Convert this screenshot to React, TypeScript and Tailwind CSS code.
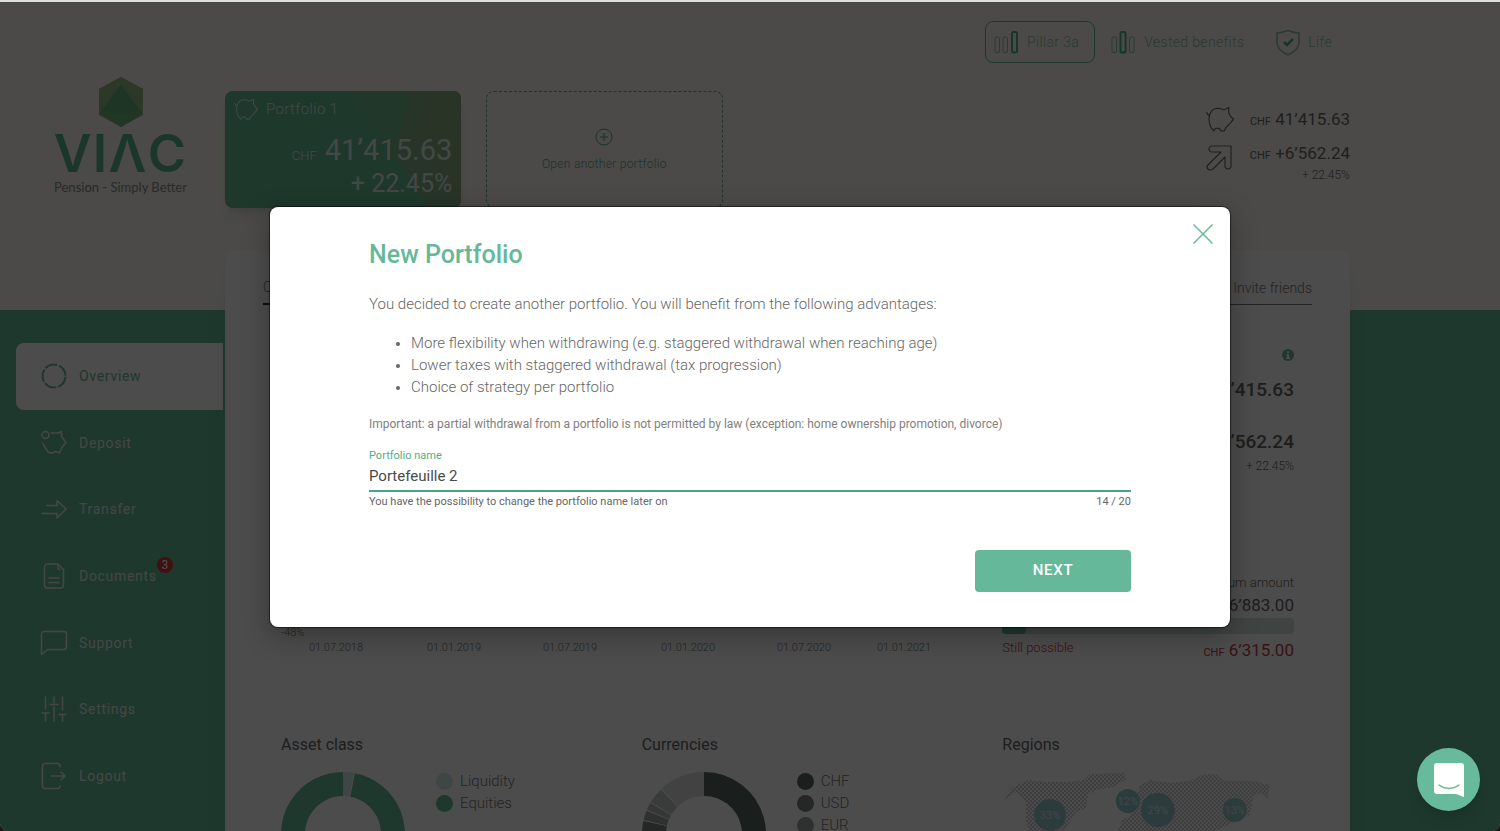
import { useState } from "react";
import type { ReactNode } from "react";

const CHART_DATES = [
  { x: 28, label: "01.07.2018" },
  { x: 146, label: "01.01.2019" },
  { x: 262, label: "01.07.2019" },
  { x: 380, label: "01.01.2020" },
  { x: 496, label: "01.07.2020" },
  { x: 596, label: "01.01.2021" },
];

const ASSETS = [
  { name: "Liquidity", color: "#d6ebe6", from: 0, to: 10 },
  { name: "Equities", color: "#67bb99", from: 11, to: 360 },
];

const CURRENCIES = [
  { name: "CHF", color: "#57645f", from: 0, to: 150 },
  { name: "USD", color: "#788481", from: 151, to: 282 },
  { name: "EUR", color: "#9da3a1", from: 283, to: 292 },
  { name: "JPY", color: "#b4b9b8", from: 293, to: 300 },
  { name: "GBP", color: "#c4c7c6", from: 301, to: 316 },
  { name: "Other", color: "#dadcdb", from: 317, to: 360 },
];

const REGIONS = [
  { label: "33%", x: 48, y: 43, r: 16 },
  { label: "12%", x: 126, y: 29, r: 12 },
  { label: "29%", x: 156, y: 38, r: 17 },
  { label: "13%", x: 233, y: 38, r: 12 },
];

function arc(from: number, to: number) {
  const p = (deg: number) => {
    const a = ((deg - 90) * Math.PI) / 180;
    return `${62 + 50 * Math.cos(a)} ${62 + 50 * Math.sin(a)}`;
  };
  return `M${p(from)} A50 50 0 ${to - from > 180 ? 1 : 0} 1 ${p(to)}`;
}

function Icon({ children, className = "size-7" }: { children: ReactNode; className?: string }) {
  return (
    <svg viewBox="0 0 28 28" className={`${className} shrink-0`} fill="none" stroke="currentColor" strokeWidth="1.5" strokeLinecap="round" strokeLinejoin="round" aria-hidden="true">
      {children}
    </svg>
  );
}

function Piggy({ className }: { className?: string }) {
  return (
    <Icon className={className}>
      <path strokeWidth="1.2" d="M.7 7.5c.4 1.600 1.400 2.600 2.800 3C4.500 6.500 7 4 10 3.500c3-.6 5.500 0 8 1.300L22.700 2.500V8l2 3.500 2.800 2.700-3.200 4-4.300 4.300-1.700 3.300H15l-1.700-2.500H9.500l-1.800 2.500-2.700-3.300C3.500 19.500 2.500 15 3.500 10.500" />
    </Icon>
  );
}

const NAV = [
  {
    label: "Overview",
    icon: <circle cx="14" cy="14" r="11.500" strokeDasharray="12.700 1.750" strokeWidth="2" strokeLinecap="butt" strokeDashoffset="-1" />,
  },
  {
    label: "Deposit",
    icon: <><circle cx="5.500" cy="6" r="3.500" /><path d="M11 4h7l3.500-1.500v5l4.500 6-4.500 5.500-2 5-3.500-1.500-4 1.500-3.500-.5-4-6L2.500 14" /></>,
  },
  {
    label: "Transfer",
    icon: <path d="M7 10.500h10V5.500L26 14l-9 9v-4.500H2" />,
  },
  {
    label: "Documents",
    badge: 3,
    icon: <><path d="M18 2H7.500a3 3 0 0 0-3 3v18a3 3 0 0 0 3 3h13a3 3 0 0 0 3-3V7.500L18 2v3.500a2 2 0 0 0 2 2" /><path d="M9 16h10M9 20.500h10" /></>,
  },
  {
    label: "Support",
    icon: <path d="M4 2.500h20a2.500 2.500 0 0 1 2.500 2.500v13a2.500 2.500 0 0 1-2.500 2.500H7.500L1.500 25.500V5A2.500 2.500 0 0 1 4 2.500z" />,
  },
  {
    label: "Settings",
    icon: <path d="M5.500 2v12M14 2v6M22.500 2v13M5.500 18v8M14 12v14M22.500 20v6M2 18h7M10 9.500h8M19 19.500h7" />,
  },
  {
    label: "Logout",
    icon: <path d="M20 5V4a2.500 2.500 0 0 0-2.500-2.500H5A2.500 2.500 0 0 0 2.500 4v20A2.500 2.500 0 0 0 5 26.500h12.500A2.500 2.500 0 0 0 20 24M11 14h14M21 10l4 4-4 4" />,
  },
];

function Logo() {
  return (
    <div className="flex flex-col items-center pl-4">
      <svg viewBox="0 0 44 50" className="h-[50px] w-11" aria-hidden="true">
        <path d="M22 0 44 12v26L22 50 0 38V12z" fill="#8fbb86" />
        <path d="M22 0 44 12v12L22 8 0 24V12z" fill="#98bb86" />
        <path d="M22 8 10 24 1 36l21 14 21-14-9-12z" fill="#64ae78" />
        <path d="M22 50 1 36l9-2 12 4 12-4 9 2z" fill="#70b77a" />
      </svg>
      <div className="mt-1 font-['Inter'] text-[52px] font-semibold leading-[46px] tracking-wide text-[#5cb896]">VIΛC</div>
      <div className="font-['Lato'] text-[13px] leading-5 text-[#8e8e8b]">Pension - Simply Better</div>
    </div>
  );
}

function Sidebar() {
  return (
    <aside className="w-[15%] shrink-0 pt-[75px]">
      <div className="h-[266px]"><Logo /></div>
      <nav className="grid h-[466px] grid-rows-7 pl-4 pr-[2px]">
        {NAV.map((n, i) => (
          <a
            key={n.label}
            href="#"
            className={`flex items-center gap-[11px] rounded-l-lg pl-6 text-sm tracking-wider ${i === 0 ? "bg-white text-[#67bb99]" : "text-[#e3efea]"}`}
          >
            <Icon>{n.icon}</Icon>
            <span className="relative">
              {n.label}
              {n.badge && (
                <span className="absolute -right-4 -top-[9px] grid size-4 place-items-center rounded-full bg-[#e0383c] text-xs tracking-normal text-white">{n.badge}</span>
              )}
            </span>
          </a>
        ))}
      </nav>
    </aside>
  );
}

function ProductTabs() {
  return (
    <div className="flex h-[42px] shrink-0 justify-end gap-3 text-sm font-light tracking-wide text-[#8fbfab]">
      <a href="#" className="flex items-center gap-2 rounded-lg border border-[#67bb99] pl-2 pr-[15px]">
        <svg viewBox="0 0 25 24" className="h-6 w-[25px]" fill="none" stroke="currentColor" aria-hidden="true">
          <rect x="1" y="7" width="4.500" height="15.500" rx="1.500" />
          <rect x="9" y="7" width="4.500" height="15.500" rx="1.500" />
          <rect x="18" y="2" width="5" height="20.500" rx="1.500" strokeWidth="2" stroke="#4fb48c" />
        </svg>
        Pillar 3a
      </a>
      <a href="#" className="flex items-center gap-2 pl-1">
        <svg viewBox="0 0 25 24" className="h-6 w-[25px]" fill="none" stroke="currentColor" aria-hidden="true">
          <rect x="1" y="7" width="4.500" height="15.500" rx="1.500" />
          <rect x="9.500" y="2" width="5" height="20.500" rx="1.500" strokeWidth="2" stroke="#4fb48c" />
          <rect x="18.500" y="7" width="4.500" height="15.500" rx="1.500" />
        </svg>
        Vested benefits
      </a>
      <a href="#" className="flex items-center gap-2 pl-5 pr-[18px]">
        <svg viewBox="0 0 24 27" className="h-[27px] w-6" fill="none" stroke="currentColor" strokeWidth="1.500" aria-hidden="true">
          <path d="M1 4c4 0 7-1 11-2.500C16 3 19 4 23 4v10c0 5-5 9-11 12C6 23 1 19 1 14z" />
          <path d="m8 13 3 3 6-6" strokeWidth="2.500" stroke="#4fb48c" />
        </svg>
        Life
      </a>
    </div>
  );
}

function Portfolios() {
  return (
    <div className="mt-7 flex h-[117px] shrink-0 gap-[25px]">
      <a href="#" className="relative flex w-[21%] flex-col overflow-hidden rounded-lg bg-[#67bb94] px-[9px] text-right text-[#dff0e8] shadow-lg">
        <svg viewBox="0 0 237 117" className="absolute inset-0 size-full" preserveAspectRatio="none" aria-hidden="true">
          <path d="M124 0h113v117h-32L168 62z" fill="#70b88e" />
          <path d="M185 0h52v117h-32l-37-55z" fill="#80b386" />
          <path d="M205 0h32v117l-30-40-20-30z" fill="#8bb083" />
        </svg>
        <span className="relative flex h-9 items-center gap-2 text-[15px] font-light tracking-wide">
          <Piggy className="size-6" />
          Portfolio 1
        </span>
        <span className="relative mt-[5px] text-[29px] leading-9">
          <small className="mr-2 text-[13px] font-light leading-none">CHF</small>41’415.63
        </span>
        <span className="relative text-[25px] leading-8">+ 22.45%</span>
      </a>
      <button type="button" className="flex w-[21%] flex-col items-center justify-center gap-[10px] rounded-lg border border-dashed border-[#67a58c] text-xs font-light tracking-wide text-[#67a58c]">
        <svg viewBox="0 0 18 18" className="size-[18px]" fill="none" stroke="currentColor" aria-hidden="true">
          <circle cx="9" cy="9" r="8" />
          <path d="M9 5v8M5 9h8" />
        </svg>
        Open another portfolio
      </button>
      <div className="ml-auto grid grid-cols-[auto_auto] content-start gap-x-4 pt-[14px] text-right text-[17px] text-[#6a6a67]">
        <Piggy />
        <div className="leading-7"><small className="text-[11px] leading-none">CHF</small> 41’415.63</div>
        <Icon className="mt-3 size-7">
          <path strokeWidth="1.2" d="M5 1h20v21q-1 2-3 2t-3-2V12L7 24q-3 2-5 0t0-4L15 7H5Q3 6 3 4t2-3z" />
        </Icon>
        <div className="pt-[6px]">
          <div className="leading-7"><small className="text-[11px] leading-none">CHF</small> +6’562.24</div>
          <div className="text-xs font-light leading-4">+ 22.45%</div>
        </div>
      </div>
    </div>
  );
}

function Donut({ slices }: { slices: typeof ASSETS }) {
  return (
    <svg viewBox="0 0 124 124" className="mt-[2px] size-[124px] shrink-0" fill="none" strokeWidth="24" aria-hidden="true">
      {slices.map((s) => (
        <path key={s.name} d={arc(s.from, s.to)} stroke={s.color} />
      ))}
    </svg>
  );
}

function Breakdown({ title, slices }: { title: string; slices: typeof ASSETS }) {
  return (
    <section>
      <h3 className="text-base leading-6 text-[#666]">{title}</h3>
      <div className="mt-[13px] flex gap-[31px]">
        <Donut slices={slices} />
        <ul className="text-[15px] font-light leading-[22px] text-[#777]">
          {slices.map((s) => (
            <li key={s.name} className="flex items-center gap-[7px]">
              <span className="size-[17px] rounded-full" style={{ background: s.color }} />
              {s.name}
            </li>
          ))}
        </ul>
      </div>
    </section>
  );
}

function Regions() {
  return (
    <section>
      <h3 className="text-base leading-6 text-[#666]">Regions</h3>
      <svg viewBox="0 0 292 124" className="mt-[15px] w-full" aria-hidden="true">
        <defs>
          <pattern id="dots" width="4" height="4" patternUnits="userSpaceOnUse">
            <circle cx="1" cy="1" r=".9" fill="#b4b4b4" />
            <circle cx="3" cy="3" r=".9" fill="#b4b4b4" />
          </pattern>
        </defs>
        <path fill="url(#dots)" d="M2 28 10 16l16-8 20 2 22 0 14-2 6-6 34-1 2 6-12 8-18 3-8 4-2 14-10 4-6 10-8 14 4 40H46L24 50 24 30 14 20zM116 60l4-12 8-4 10-30 10-6 20 3 20-2 12-6 14-1 8 7 30 0 16 4-2 14-6-6-8 2-4 20-10 4-16 8-14 6-10 12-10-14-18 36h-22l-8-30z" />
        {REGIONS.map((r) => (
          <g key={r.label}>
            <circle cx={r.x} cy={r.y} r={r.r} fill="#94c8cb" />
            <text x={r.x} y={r.y + 4} textAnchor="middle" fontSize="11" fill="#d8ecee">{r.label}</text>
          </g>
        ))}
      </svg>
    </section>
  );
}

function Panel() {
  return (
    <main className="mt-[43px] flex-1 rounded-t-lg bg-white shadow-xl">
      <div className="mx-[38px] flex justify-between border-b border-[#777] pt-6 text-sm font-light leading-6 text-[#777]">
        <a href="#" className="-mb-px border-b-2 border-[#333] pb-1">Overview</a>
        <a href="#" className="flex items-center gap-1 pb-1">
          <Icon className="size-4"><path d="M3 25c0-6 4-9 9-9s9 3 9 9M12 13a5 5 0 1 0 0-10 5 5 0 0 0 0 10M23 6v8M19 10h8" /></Icon>
          Invite friends
        </a>
      </div>
      <div className="grid grid-cols-3 gap-x-[69px] px-14">
        <svg className="col-span-2 h-[357px] w-full overflow-visible text-[11px] font-light" fill="#777" role="img" aria-label="Performance">
          <text x="0" y="331">-48%</text>
          {CHART_DATES.map((d) => (
            <text key={d.label} x={d.x} y="346">{d.label}</text>
          ))}
        </svg>
        <div className="pt-11 text-right text-[#666]">
          <svg viewBox="0 0 12 12" className="ml-auto size-3" aria-hidden="true">
            <circle cx="6" cy="6" r="6" fill="#67bb99" />
            <path d="M5 2.500h2v1.500H5zM4.500 5H7v3.500h1V10H4V8.500h1v-2h-.5z" fill="#fff" />
          </svg>
          <div className="mt-[15px] text-[19px] font-medium leading-7">41’415.63</div>
          <div className="mt-6 text-[19px] font-medium leading-7">+6’562.24</div>
          <div className="text-xs font-light leading-5">+ 22.45%</div>
          <div className="mt-[97px] text-[13px] font-light leading-5">Maximum amount</div>
          <div className="text-[17px] leading-6">6’883.00</div>
          <div className="mt-px h-4 rounded bg-[#d3e0de]">
            <div className="h-4 w-6 rounded bg-[#67bb99]" />
          </div>
          <div className="mt-1 flex justify-between text-[#c03c44]">
            <span className="text-[13px] font-light leading-5">Still possible</span>
            <span className="text-[17px] leading-6"><small className="text-[11px]">CHF</small> 6’315.00</span>
          </div>
        </div>
      </div>
      <div className="mt-[68px] grid grid-cols-3 gap-x-[69px] px-14">
        <Breakdown title="Asset class" slices={ASSETS} />
        <Breakdown title="Currencies" slices={CURRENCIES} />
        <Regions />
      </div>
    </main>
  );
}

function NewPortfolioDialog() {
  const [name, setName] = useState("Portefeuille 2");

  return (
    <div role="dialog" aria-modal="true" aria-labelledby="dialog-title" className="relative w-[64%] rounded-lg bg-white px-[99px] pb-[35px] pt-8 text-[#666] shadow-[0_8px_28px_rgba(0,0,0,0.3),0_0_1px_1px_rgba(0,0,0,0.5)]">
      <button type="button" aria-label="Close" className="absolute right-4 top-4 text-[#67bb99]">
        <svg viewBox="0 0 22 22" className="size-[22px]" fill="none" stroke="currentColor" strokeWidth="1.500" aria-hidden="true">
          <path d="m1.500 1.500 19 19M20.500 1.500l-19 19" />
        </svg>
      </button>
      <h2 id="dialog-title" className="text-[25px] font-medium leading-8 text-[#67b899]">New Portfolio</h2>
      <p className="mt-[22px] text-[15px] font-light leading-[22px]">You decided to create another portfolio. You will benefit from the following advantages:</p>
      <ul className="mt-[17px] list-disc pl-[42px] text-[15px] font-light leading-[22px] marker:text-[13px]">
        <li>More flexibility when withdrawing (e.g. staggered withdrawal when reaching age)</li>
        <li>Lower taxes with staggered withdrawal (tax progression)</li>
        <li>Choice of strategy per portfolio</li>
      </ul>
      <p className="mt-4 text-xs leading-5 text-[#808080]">Important: a partial withdrawal from a portfolio is not permitted by law (exception: home ownership promotion, divorce)</p>
      <div className="mt-[14px] text-[11px] leading-4">
        <label htmlFor="portfolio-name" className="block text-[#4fae88]">Portfolio name</label>
        <input
          id="portfolio-name"
          value={name}
          maxLength={20}
          onChange={(e) => setName(e.target.value)}
          className="block h-7 w-full border-b-2 border-[#45a880] pb-[2px] text-[15px] text-[#4a4a4a] outline-none"
        />
        <div className="mt-[2px] flex justify-between">
          <span>You have the possibility to change the portfolio name later on</span>
          <span>{name.length} / 20</span>
        </div>
      </div>
      <div className="mt-10 flex justify-end">
        <button type="button" className="h-[42px] w-[156px] rounded bg-[#65b899] text-[15px] font-medium tracking-wider text-white">NEXT</button>
      </div>
    </div>
  );
}

export default function App() {
  return (
    <div className="h-screen bg-[#1d1318] font-['Roboto',sans-serif]">
      <div className="relative h-full overflow-hidden rounded-b-lg border-t-2 border-[#dcdfdf] bg-[linear-gradient(to_bottom,#faf9f0_308px,#67bb99_308px)]">
        <div className="flex h-full">
          <Sidebar />
          <div className="flex w-3/4 flex-col pt-[19px]">
            <ProductTabs />
            <Portfolios />
            <Panel />
          </div>
        </div>
        <div className="absolute inset-0 flex items-center justify-center bg-black/70">
          <NewPortfolioDialog />
        </div>
        <button type="button" aria-label="Open chat" className="absolute bottom-5 right-5 grid size-[63px] place-items-center rounded-full bg-[#67ba9b] shadow-lg">
          <svg viewBox="0 0 30 34" className="h-[34px] w-[30px]" aria-hidden="true">
            <path d="M3 0h24a3 3 0 0 1 3 3v31l-8-3H3a3 3 0 0 1-3-3V3a3 3 0 0 1 3-3z" fill="#fff" />
            <path d="M5 22c6 4.500 14 4.500 20 0" fill="none" stroke="#67ba9b" strokeWidth="1.500" strokeLinecap="round" />
          </svg>
        </button>
      </div>
    </div>
  );
}
